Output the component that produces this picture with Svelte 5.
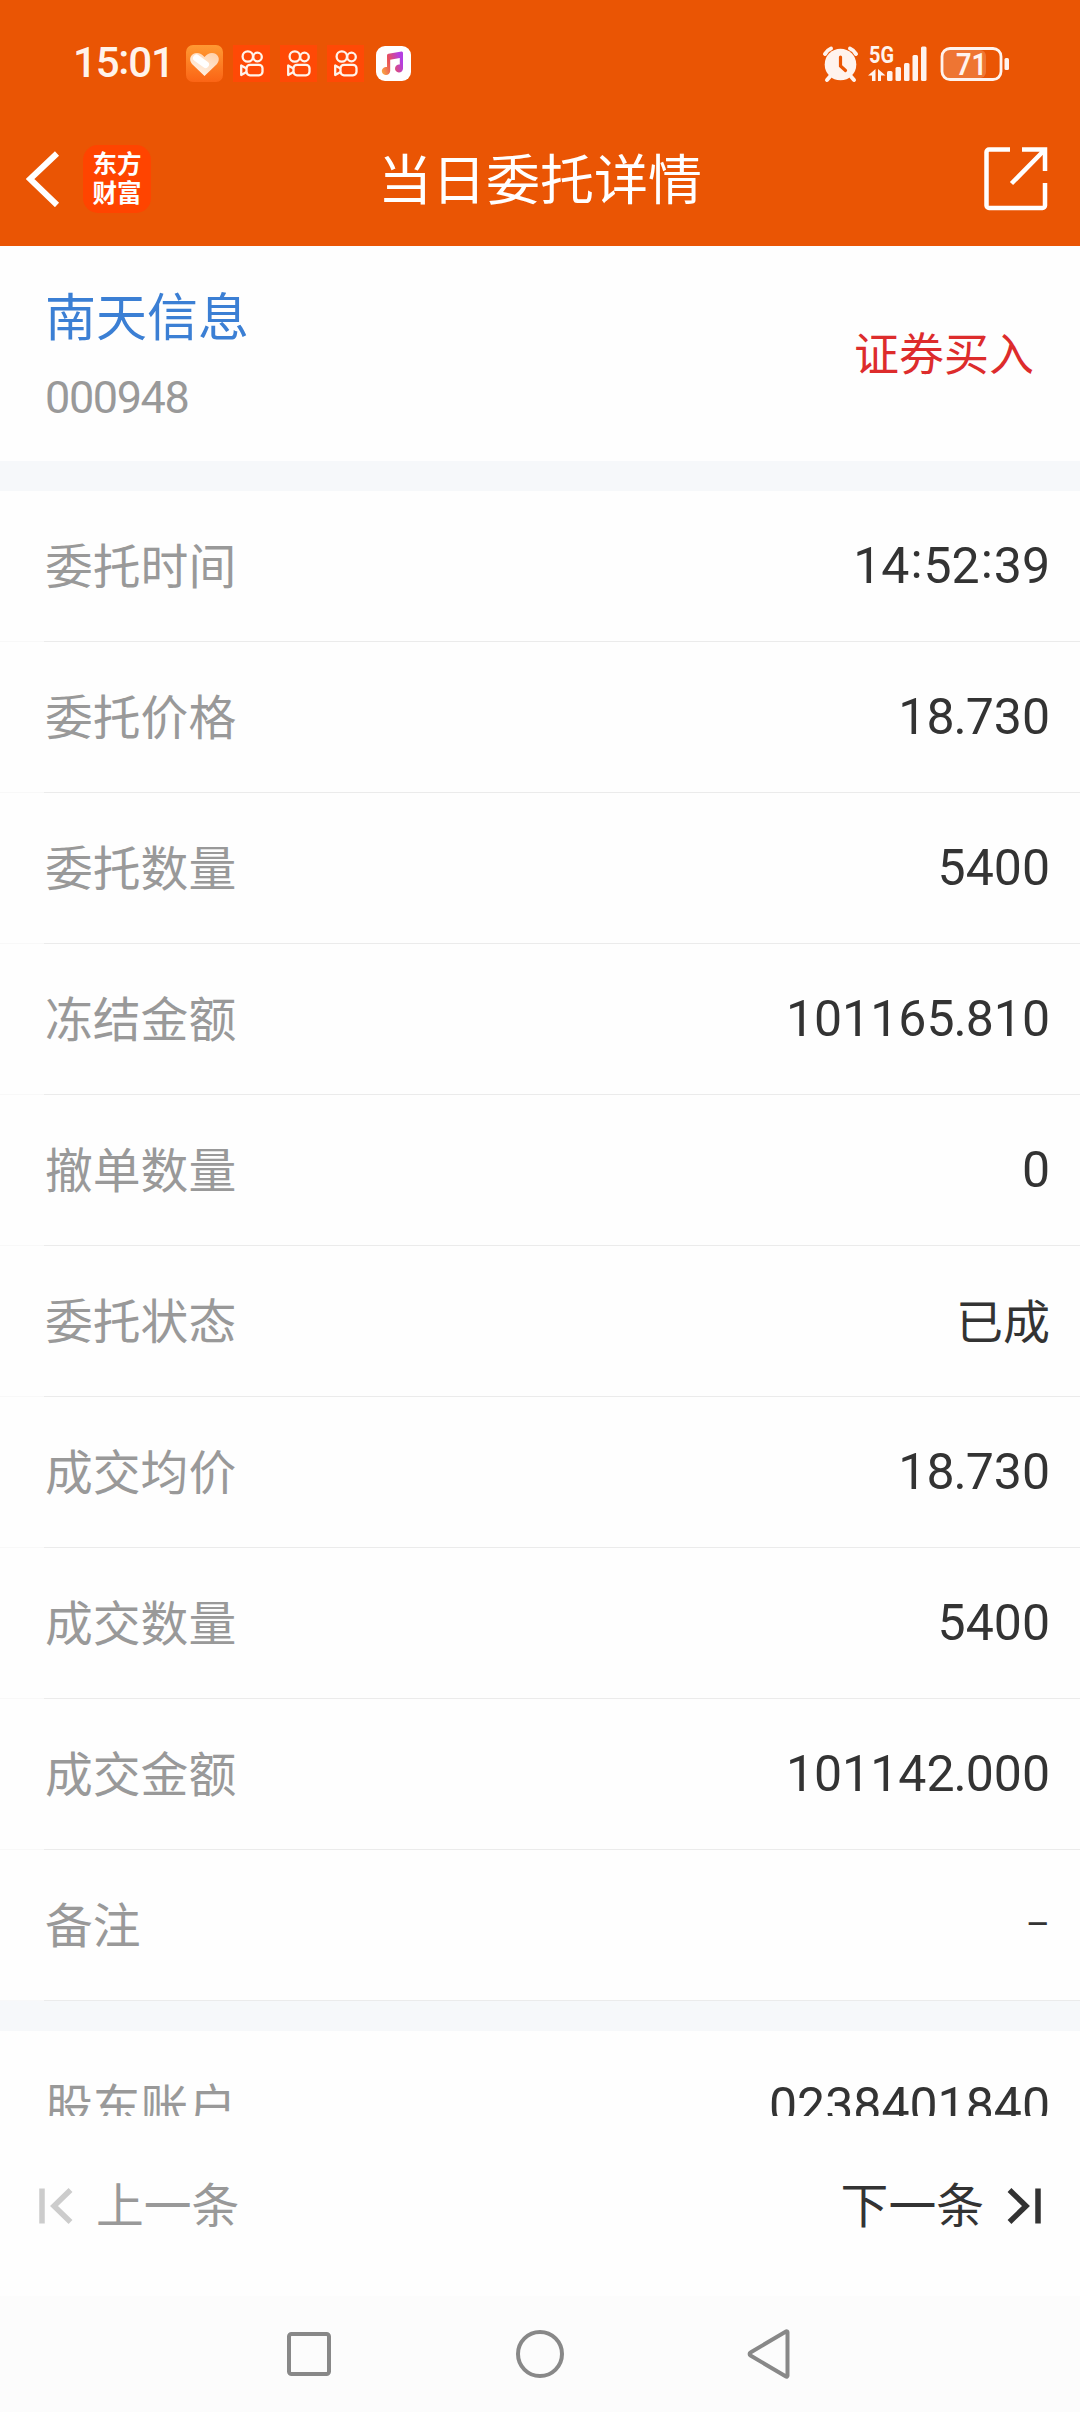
<script>
  const apps = [1, 2, 3];
  const bars = [
    { x: 887, h: 10 },
    { x: 895.5, h: 14 },
    { x: 904, h: 18 },
    { x: 912.5, h: 26 },
    { x: 921, h: 34.5 },
  ];

  const rows = [
    { label: "委托时间", value: "14:52:39" },
    { label: "委托价格", value: "18.730" },
    { label: "委托数量", value: "5400" },
    { label: "冻结金额", value: "101165.810" },
    { label: "撤单数量", value: "0" },
    { label: "委托状态", value: "已成", kind: "text" },
    { label: "成交均价", value: "18.730" },
    { label: "成交数量", value: "5400" },
    { label: "成交金额", value: "101142.000" },
    { label: "备注", value: "–", kind: "empty" },
  ];

  const account = { label: "股东账户", value: "0238401840" };

  // separators get their own element so they can be nudged
  const split = (value) => value.split(/([:.])/);
</script>

<div class="screen">
  <header>
    <div class="status">
      <span class="clock">15<i>:</i>01</span>
      <svg class="app-heart" width="37" height="37" viewBox="0 0 37 37">
        <defs>
          <linearGradient id="heartBg" x1="0" y1="0" x2="0" y2="1">
            <stop offset="0" stop-color="#ff9a33" />
            <stop offset="1" stop-color="#fb6415" />
          </linearGradient>
          <linearGradient id="heartFg" x1="1" y1="0" x2="0.3" y2="1">
            <stop offset="0" stop-color="#ffcfa6" />
            <stop offset="1" stop-color="#fff2e6" />
          </linearGradient>
        </defs>
        <rect width="37" height="37" rx="7" fill="url(#heartBg)" />
        <path d="M18.500 31 6 19C2 14 5 8 11 8c3 0 5 1.500 7.500 4 2.500-2.500 4.500-4 7.500-4 6 0 9 6 5 11Z" fill="url(#heartFg)" />
        <path d="m10.500 13 9 6.500" stroke="#fff" stroke-width="7" stroke-linecap="round" />
      </svg>
      {#each apps as app (app)}
        <svg class="app-video" width="37" height="37" viewBox="0 0 37 37">
          <rect width="37" height="37" fill="#ff4906" />
          <g fill="none" stroke="#fff3ea" stroke-width="2.300">
            <circle cx="14.800" cy="11.500" r="5.200" />
            <circle cx="24.500" cy="12" r="4.300" />
            <rect x="13.500" y="19.800" width="16" height="10.500" rx="3.500" />
            <path d="M13.500 23.500 8.200 20.500v9.500l5.300-3" stroke-linejoin="round" />
          </g>
        </svg>
      {/each}
      <svg class="app-music" width="35" height="35" viewBox="0 0 35 35">
        <defs>
          <linearGradient id="note" x1="0" y1="1" x2="1" y2="0.6">
            <stop offset="0" stop-color="#fbb040" />
            <stop offset="0.5" stop-color="#e8505a" />
            <stop offset="1" stop-color="#b43ee0" />
          </linearGradient>
        </defs>
        <rect width="35" height="35" rx="9" fill="#fff" />
        <path d="M11 9.500Q11 8 12.500 7.700L25.500 5.500Q27 5.300 27 7v15.500a4 4 0 1 1-3.200-3.900V12l-9.600 1.800V25a4.200 4 0 1 1-3.200-3.900Z" fill="url(#note)" />
      </svg>
      <svg class="system" width="190" height="40" viewBox="820 42 190 40">
        <g fill="#fff3ee">
          <circle cx="840.500" cy="63.500" r="15.800" />
          <g fill="none" stroke="#fff3ee" stroke-width="4" stroke-linecap="round">
            <path d="M825 53a12 12 0 0 1 6-5.500M856 53a12 12 0 0 0-6-5.500M830 75.500l-3 3.500M851 75.500l3 3.500" />
          </g>
          <path d="M840.500 56v9l5 4.500" fill="none" stroke="#ea5504" stroke-width="3.200" stroke-linecap="round" />
          <text x="869" y="61.500" class="net" textLength="25" lengthAdjust="spacingAndGlyphs">5G</text>
          <path d="M868 74.500l7.500-6.500v12H872v-5.500zM885.500 74.500 878 68v12h3v-5.500z" />
          {#each bars as bar}
            <rect x={bar.x} y={80 - bar.h} width="5.500" height={bar.h} rx="1.500" />
          {/each}
          <rect x="943" y="49" width="43" height="28" rx="6" fill-opacity="0.2" />
          <rect x="942" y="47.500" width="59" height="31" rx="8" fill="none" stroke="#fff3ee" stroke-width="2.800" />
          <rect x="1004.500" y="57" width="4.500" height="12" rx="1.500" />
          <text x="956" y="74" class="level" textLength="31" lengthAdjust="spacingAndGlyphs">71</text>
        </g>
      </svg>
    </div>

    <div class="titlebar">
      <svg class="back" width="34" height="56" viewBox="0 0 34 56">
        <path d="M31 2.500 4 28l27 26" fill="none" stroke="#fff" stroke-width="6" />
      </svg>
      <div class="logo"><span>东方</span><span>财富</span></div>
      <h1>当日委托详情</h1>
      <svg class="share" width="64" height="64" viewBox="0 0 64 64">
        <g fill="none" stroke="#fff" stroke-width="4.500">
          <path d="M26 2.500H5a2.500 2.500 0 0 0-2.500 2.500v53.500A2.500 2.500 0 0 0 5 61h53.500a2.500 2.500 0 0 0 2.500-2.500V36" />
          <path d="M38 2.500h23V24M61 2.500 27.500 36.500" />
        </g>
      </svg>
    </div>
  </header>

  <section class="stock">
    <div>
      <div class="name">南天信息</div>
      <div class="code">000948</div>
    </div>
    <div class="side">证券买入</div>
  </section>

  <main>
    <div class="group">
      {#each rows as row}
        <div class="row">
          <span class="label">{row.label}</span>
          <span class="value {row.kind ?? ''}">
            {#each split(row.value) as part}{#if part === ":"}<i>:</i>{:else if part === "."}<b>.</b>{:else}{part}{/if}{/each}
          </span>
        </div>
      {/each}
    </div>
    <div class="group">
      <div class="row">
        <span class="label">{account.label}</span>
        <span class="value">{account.value}</span>
      </div>
    </div>
  </main>

  <footer>
    <div class="pager prev">
      <svg width="34" height="36" viewBox="0 0 34 36">
        <path d="M3 .5v35M31.500 2 15 18l16.500 16" fill="none" stroke="#ccc" stroke-width="5.500" />
      </svg>
      <span>上一条</span>
    </div>
    <div class="pager next">
      <span>下一条</span>
      <svg width="34" height="36" viewBox="0 0 34 36">
        <path d="M31 .5v35M2.500 2 19 18 2.500 34" fill="none" stroke="#333" stroke-width="5.500" />
      </svg>
    </div>
  </footer>

  <nav>
    <svg width="50" height="50" viewBox="0 0 50 50">
      <rect x="5" y="5" width="40" height="40" rx="2.500" />
    </svg>
    <svg width="50" height="50" viewBox="0 0 50 50">
      <circle cx="25" cy="25" r="22" />
    </svg>
    <svg width="50" height="50" viewBox="0 0 50 50">
      <path d="M41.500 3.500v43a1 1 0 0 1-1.500 1L4.500 26.500a1.700 1.700 0 0 1 0-3L40 2.500a1 1 0 0 1 1.500 1Z" />
    </svg>
  </nav>
</div>

<style>
  :global(body) {
    margin: 0;
    background: #fff;
  }

  .screen {
    display: flex;
    flex-direction: column;
    width: 1080px;
    height: 2412px;
    overflow: hidden;
    background: #fefefe;
    color: #333;
    font-family: Roboto, "Noto Sans CJK SC", sans-serif;
  }

  svg {
    display: block;
    flex: none;
  }

  i {
    font-style: normal;
    line-height: 1;
  }

  header {
    height: 246px;
    flex: none;
    background: #ea5504;
    color: #fff;
  }

  .status {
    display: flex;
    align-items: center;
    height: 126px;
    padding: 0 70px 0 73px;
  }

  .clock {
    width: 113px;
    color: #fff3ea;
    font-size: 42px;
    font-weight: 500;
    letter-spacing: -1.200px;
    line-height: 50px;
    white-space: nowrap;
  }

  .clock i {
    vertical-align: 3px;
  }

  .app-heart,
  .app-video {
    margin-right: 10px;
  }

  .app-music {
    margin-left: 2px;
  }

  .system {
    margin-left: auto;
  }

  .net {
    font-size: 24px;
    font-weight: 700;
  }

  .level {
    font-size: 32px;
    font-weight: 600;
  }

  .titlebar {
    display: flex;
    align-items: center;
    height: 104px;
    padding: 1px 32px 0 26px;
  }

  .logo {
    display: flex;
    flex-direction: column;
    justify-content: center;
    width: 68px;
    height: 68px;
    margin-left: 23px;
    border-radius: 15px;
    background: #ff4400;
    font-size: 24.500px;
    font-weight: 700;
    line-height: 29px;
    text-align: center;
  }

  h1 {
    flex: 1;
    margin: 0 55px 0 0;
    padding-top: 6px;
    font-size: 54px;
    font-weight: 400;
    line-height: 70px;
    text-align: center;
  }

  .stock {
    display: flex;
    align-items: center;
    justify-content: space-between;
    flex: none;
    box-sizing: border-box;
    height: 215px;
    padding: 0 46px 0 45px;
  }

  .name {
    padding-top: 3px;
    color: #3b7fd4;
    font-size: 51px;
    line-height: 76px;
  }

  .code {
    margin-top: 9px;
    color: #999;
    font-size: 45px;
    letter-spacing: -1.400px;
    line-height: 64px;
  }

  .side {
    padding-top: 4px;
    color: #dd2c2c;
    font-size: 45px;
    line-height: 64px;
  }

  main {
    height: 1655px;
    flex: none;
    overflow: hidden;
  }

  .group {
    border-top: 30px solid #f6f8fa;
  }

  .row {
    display: flex;
    align-items: center;
    justify-content: space-between;
    box-sizing: border-box;
    height: 151px;
    padding: 0 30px 0 45px;
    border-bottom: 1px solid #ebebeb;
    border-image: linear-gradient(to right, #f8f8f8 45px, #ebebeb 45px) 1;
    border-width: 0 0 1px;
  }

  .label {
    padding-top: 3px;
    color: #999;
    font-size: 47.800px;
    line-height: 70px;
  }

  .value {
    font-size: 50px;
    line-height: 70px;
  }

  .value i {
    margin: 0 1px;
    vertical-align: 5px;
  }

  .value b {
    margin: 0 -1px;
    font-weight: 400;
  }

  .text {
    padding-top: 3px;
    font-size: 47px;
  }

  .empty {
    padding-top: 0;
    font-size: 37px;
  }

  footer {
    display: flex;
    align-items: center;
    justify-content: space-between;
    flex: none;
    height: 180px;
    padding: 0 39px;
  }

  .pager {
    display: flex;
    align-items: center;
    gap: 23px;
    font-size: 47.800px;
    line-height: 70px;
  }

  .pager span {
    padding-top: 2px;
  }

  .prev {
    color: #999;
  }

  nav {
    display: flex;
    align-items: center;
    justify-content: center;
    gap: 181px;
    flex: none;
    height: 116px;
    background: #fcfcfc;
  }

  nav svg {
    fill: none;
    stroke: #888;
    stroke-width: 4px;
  }
</style>
